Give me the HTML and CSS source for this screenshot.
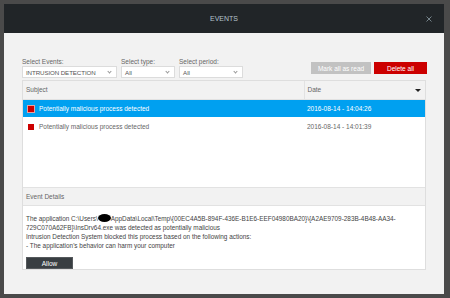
FILE: index.html
```html
<!DOCTYPE html>
<html lang="en">
<head>
    <meta charset="UTF-8">
    <title>Events</title>
    <link rel="stylesheet" href="styles.css">
</head>
<body>

<div class="dialog">
    <div class="dialog-header">
        <span class="dialog-title">EVENTS</span>
        <span class="close-btn">
            <svg width="6" height="6" viewBox="0 0 6 6"><path d="M0.5 0.5 L5.5 5.5 M5.5 0.5 L0.5 5.5" stroke="#76848b" stroke-width="1"/></svg>
        </span>
    </div>

    <div class="dialog-body">
        <div class="toolbar">
            <div class="filters">
                <div class="filter">
                    <label>Select Events:</label>
                    <div class="select select-events">INTRUSION DETECTION<span class="caret"></span></div>
                </div>
                <div class="filter">
                    <label>Select type:</label>
                    <div class="select select-type">All<span class="caret"></span></div>
                </div>
                <div class="filter">
                    <label>Select period:</label>
                    <div class="select select-period">All<span class="caret"></span></div>
                </div>
            </div>
            <div class="actions">
                <button class="btn-mark">Mark all as read</button>
                <button class="btn-delete">Delete all</button>
            </div>
        </div>

        <div class="events-panel">
            <div class="list-wrap">
                <table class="events-table">
                    <thead>
                        <tr>
                            <th class="col-subject">Subject</th>
                            <th class="col-date">Date <span class="sort-arrow"></span></th>
                        </tr>
                    </thead>
                    <tbody>
                        <tr class="selected">
                            <td><span class="flag"></span>Potentially malicious process detected</td>
                            <td>2016-08-14 - 14:04:26</td>
                        </tr>
                        <tr>
                            <td><span class="flag"></span>Potentially malicious process detected</td>
                            <td>2016-08-14 - 14:01:39</td>
                        </tr>
                    </tbody>
                </table>
            </div>

            <div class="details-head">Event Details</div>
            <div class="details-body">
                <p>The application C:\Users\<span class="redacted"></span>AppData\Local\Temp\{00EC4A5B-894F-436E-B1E6-EEF04980BA20}\{A2AE9709-283B-4B48-AA34-<br>
                729C070A62FB}\InsDrv64.exe was detected as potentially malicious<br>
                Intrusion Detection System blocked this process based on the following actions:<br>
                - The application's behavior can harm your computer</p>
                <button class="btn-allow">Allow</button>
            </div>
        </div>
    </div>
</div>

</body>
</html>
```

FILE: styles.css
```css
* {
    box-sizing: border-box;
}
body {
    margin: 0;
    padding: 4px 6px 4px 4px;
    background-color: #4a4a4a;
    font-family: "Liberation Sans", Arial, sans-serif;
    font-size: 6.5px;
    color: #555;
}
.dialog {
    width: 440px;
    height: 290px;
    display: flex;
    flex-direction: column;
    background-color: #f2f2f2;
}
.dialog-header {
    height: 29px;
    background-color: #212528;
    display: flex;
    align-items: center;
    justify-content: center;
    position: relative;
}
.dialog-title {
    color: #b4c2cb;
    font-size: 7px;
}
.close-btn {
    position: absolute;
    right: 12px;
    top: 12px;
    line-height: 0;
}
.dialog-body {
    flex: 1;
    padding: 24px 17px 0 18px;
}
.toolbar {
    display: flex;
    justify-content: space-between;
    align-items: flex-end;
}
.filters {
    display: flex;
    gap: 4px;
}
.filter label {
    display: block;
    height: 9px;
    line-height: 9px;
    color: #666;
}
.select {
    height: 12px;
    line-height: 11px;
    background-color: #fff;
    border: 1px solid #dcdcdc;
    padding: 0 3px;
    position: relative;
    color: #555;
    font-size: 6.2px;
    white-space: nowrap;
}
.caret {
    position: absolute;
    right: 5px;
    top: 3px;
    width: 3px;
    height: 3px;
    border-right: 1px solid #999;
    border-bottom: 1px solid #999;
    transform: rotate(45deg);
}
.select-events {
    width: 95px;
    letter-spacing: -0.1px;
}
.select-type {
    width: 54px;
}
.select-period {
    width: 64px;
}
.actions {
    display: flex;
    gap: 3px;
    margin-bottom: 4px;
}
.actions button {
    height: 12px;
    border: none;
    padding: 0;
    font-family: inherit;
    font-size: 6.5px;
    color: #fff;
}
.btn-mark {
    width: 60px;
    background-color: #c2c2c2;
    color: #f4f4f4;
}
.btn-delete {
    width: 53px;
    background-color: #cc0000;
}
.events-panel {
    margin-top: 2px;
    width: 404px;
    height: 190px;
    background-color: #fff;
    border: 1px solid #dedede;
    display: flex;
    flex-direction: column;
}
.list-wrap {
    height: 107px;
}
.events-table {
    width: 100%;
    border-collapse: collapse;
}
.events-table th {
    height: 18px;
    background-color: #f2f2f2;
    border-bottom: 1px solid #e2e2e2;
    text-align: left;
    font-weight: normal;
    padding: 0 3px;
    color: #666;
}
.events-table .col-subject {
    width: 281px;
    border-right: 1px solid #e2e2e2;
}
.col-date {
    position: relative;
}
.sort-arrow {
    position: absolute;
    right: 4px;
    top: 8px;
    border-left: 3px solid transparent;
    border-right: 3px solid transparent;
    border-top: 3px solid #222;
}
.events-table td {
    height: 18px;
    padding: 0 3px;
    color: #666;
}
.events-table tr.selected td {
    background-color: #00a0f0;
    color: #fff;
}
.flag {
    display: inline-block;
    width: 6px;
    height: 6px;
    background-color: #cc0000;
    vertical-align: -1px;
    margin: 0 5px 0 2px;
}
.selected .flag {
    outline: 1px solid #e8a0a0;
}
.details-head {
    height: 19px;
    line-height: 18px;
    background-color: #f2f2f2;
    border-top: 1px solid #e2e2e2;
    border-bottom: 1px solid #e2e2e2;
    padding: 0 3px;
    color: #666;
}
.details-body {
    flex: 1;
    padding: 8px 3px 0 3px;
}
.details-body p {
    margin: 0;
    font-size: 6.4px;
    line-height: 9px;
    color: #444;
}
.redacted {
    display: inline-block;
    width: 13px;
    height: 8px;
    border-radius: 50%;
    background-color: #000;
    vertical-align: -1px;
}
.btn-allow {
    margin-top: 7px;
    width: 47px;
    height: 12px;
    padding: 0;
    border: 1px solid #55595c;
    background-color: #393e42;
    color: #fff;
    font-family: inherit;
    font-size: 6.5px;
}
```
